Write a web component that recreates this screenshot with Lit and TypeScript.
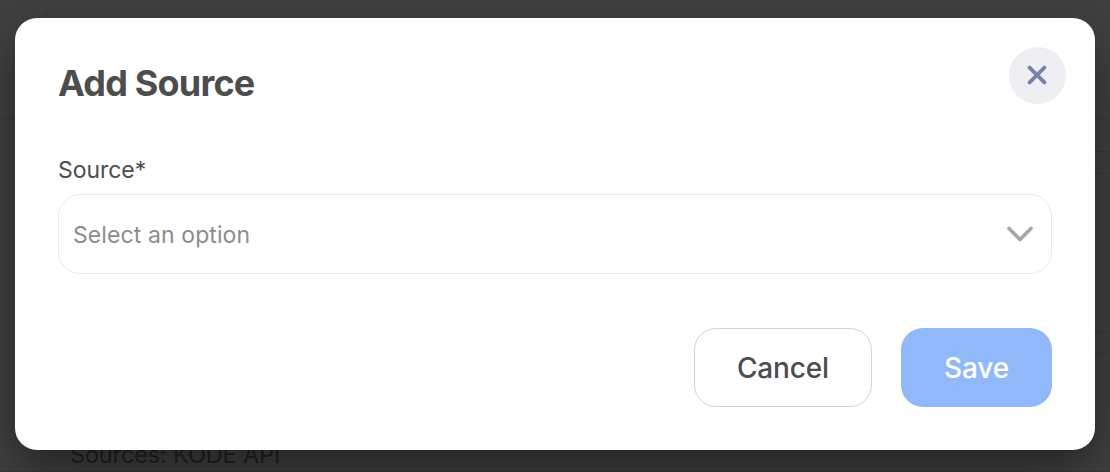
import { LitElement, html, css } from 'lit';
import { customElement, property } from 'lit/decorators.js';

@customElement('source-backdrop')
export class SourceBackdrop extends LitElement {
  @property() sources = '';

  static styles = css`
    :host {
      display: block;
      position: absolute;
      inset: 0;
      overflow: hidden;
      background: #414141;
    }

    .panel {
      position: absolute;
      left: 41px;
      top: -8px;
      width: 1200px;
      height: 600px;
      box-sizing: border-box;
      border: 1px solid #393939;
      border-radius: 40px;
    }

    .row {
      position: absolute;
      left: 70px;
      bottom: 1px;
      color: #222;
      font-size: 23.5px;
      line-height: 32px;
      letter-spacing: -0.15px;
      white-space: nowrap;
    }

    .rule {
      position: absolute;
      right: 0;
      width: 60px;
      height: 23px;
      box-sizing: border-box;
      border-top: 1px solid #393939;
      border-bottom: 1px solid #393939;
    }

    .rule.first {
      top: 151px;
    }

    .rule.second {
      top: 331px;
    }

    .edge {
      position: absolute;
      left: 0;
      right: 0;
      height: 1px;
      background: #393939;
    }

    .edge.upper {
      top: 118px;
    }

    .edge.lower {
      top: 471px;
    }
  `;

  render() {
    return html`
      <div class="panel"></div>
      <div class="edge upper"></div>
      <div class="edge lower"></div>
      <div class="rule first"></div>
      <div class="rule second"></div>
      <div class="row">Sources: ${this.sources}</div>
    `;
  }
}

@customElement('source-select')
export class SourceSelect extends LitElement {
  @property() label = '';
  @property() placeholder = '';

  static styles = css`
    :host {
      display: block;
    }

    .label {
      display: block;
      margin-bottom: 8px;
      color: #4d4d4d;
      font-size: 23px;
      line-height: 32px;
      letter-spacing: -0.05px;
    }

    .select {
      display: flex;
      align-items: center;
      justify-content: space-between;
      width: 100%;
      height: 80px;
      box-sizing: border-box;
      padding: 2px 17px 0 14px;
      border: 1px solid #e9e9e9;
      border-radius: 22px;
      background: #fff;
      color: #8c8c8c;
      font: inherit;
      font-size: 23px;
      letter-spacing: 0.1px;
    }

    .chevron {
      width: 28px;
      height: 18px;
      margin-top: -3px;
    }
  `;

  render() {
    return html`
      <label class="label" for="source">${this.label}</label>
      <button class="select" id="source" type="button">
        <span>${this.placeholder}</span>
        <svg class="chevron" viewBox="0 0 28 18" fill="none" stroke="#a6a6a6" stroke-width="3.6" stroke-linecap="round" stroke-linejoin="round">
          <path d="M3 3.5 14 14.5 25 3.5" />
        </svg>
      </button>
    `;
  }
}

@customElement('app-root')
export class AppRoot extends LitElement {
  static styles = css`
    :host {
      display: flex;
      position: relative;
      height: 472px;
      box-sizing: border-box;
      padding: 18px 15px 22px;
      overflow: hidden;
      font-family: Inter, 'Liberation Sans', sans-serif;
    }

    .dialog {
      position: relative;
      flex: 1;
      display: flex;
      flex-direction: column;
      box-sizing: border-box;
      padding: 29px 43px 43px;
      border-radius: 22px;
      background: #fff;
      box-shadow: 0 20px 50px rgba(0, 0, 0, 0.45);
    }

    .header {
      display: flex;
      justify-content: space-between;
      height: 57px;
      margin: 0 -14px 50px 0;
    }

    .title {
      margin: 14px 0 0;
      color: #4d4d4d;
      font-size: 36px;
      font-weight: 700;
      line-height: 44px;
      letter-spacing: -0.8px;
    }

    .close {
      display: flex;
      align-items: center;
      justify-content: center;
      width: 57px;
      height: 57px;
      padding: 0 1px 1px 0;
      border: 0;
      border-radius: 50%;
      background: #eeeff3;
    }

    .actions {
      display: flex;
      justify-content: flex-end;
      gap: 29px;
      margin-top: auto;
    }

    .button {
      height: 79px;
      box-sizing: border-box;
      padding: 0;
      border-radius: 22px;
      font: inherit;
      font-size: 28px;
      font-weight: 500;
      letter-spacing: -0.15px;
    }

    .cancel {
      width: 178px;
      border: 1px solid #d3d3d3;
      background: #fff;
      color: #4d4d4d;
    }

    .save {
      width: 151px;
      border: 0;
      background: #91b9fa;
      color: #fff;
    }
  `;

  render() {
    return html`
      <source-backdrop sources="KODE API"></source-backdrop>
      <div class="dialog" role="dialog" aria-labelledby="title">
        <div class="header">
          <h2 class="title" id="title">Add Source</h2>
          <button class="close" type="button" aria-label="Close">
            <svg width="20" height="20" viewBox="0 0 20 20" fill="none" stroke="#7584a8" stroke-width="3.8" stroke-linecap="round">
              <path d="M2.6 2.6 17.4 17.4M17.4 2.6 2.6 17.4" />
            </svg>
          </button>
        </div>
        <source-select label="Source*" placeholder="Select an option"></source-select>
        <div class="actions">
          <button class="button cancel" type="button">Cancel</button>
          <button class="button save" type="button">Save</button>
        </div>
      </div>
    `;
  }
}
